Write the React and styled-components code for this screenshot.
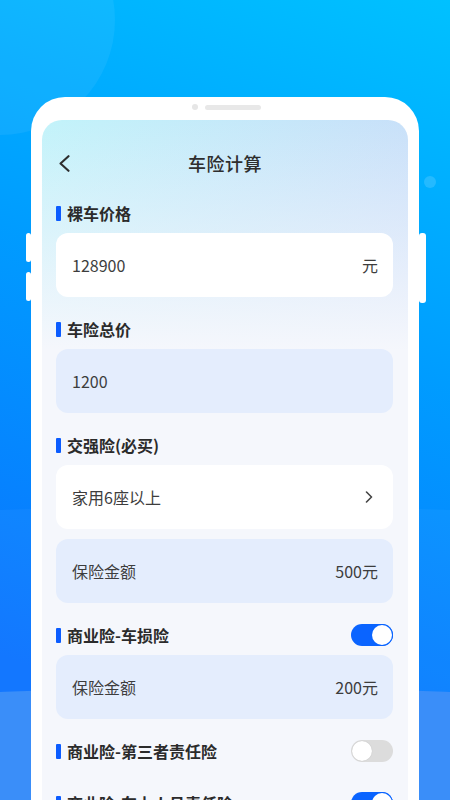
import React from "react";
import styled, { createGlobalStyle } from "styled-components";

const GlobalStyle = createGlobalStyle`
  html, body {
    margin: 0;
    padding: 0;
  }
  body {
    font-family: "Noto Sans CJK SC", "Noto Sans", sans-serif;
    color: #333;
  }
`;

const Page = styled.div`
  position: relative;
  width: 450px;
  height: 800px;
  overflow: hidden;
  background: linear-gradient(200deg, #00c1ff 0%, #009cff 40%, #0a72ff 85%);
`;

const Bubble = styled.div`
  position: absolute;
  border-radius: 50%;
  left: ${(p) => p.$x}px;
  top: ${(p) => p.$y}px;
  width: ${(p) => p.$size}px;
  height: ${(p) => p.$size}px;
  background: rgba(255, 255, 255, ${(p) => p.$alpha});
`;

const Wave = styled.div`
  position: absolute;
  left: -1275px;
  top: ${(p) => p.$top}px;
  width: 3000px;
  height: 900px;
  border-radius: 50%;
  background: ${(p) => p.$color};
`;

const Phone = styled.div`
  position: relative;
  z-index: 1;
  margin: 97px 0 0 31px;
  width: 388px;
  height: 760px;
  box-sizing: border-box;
  padding: 23px 11px 0;
  background: #fff;
  border-radius: 34px 34px 0 0;
`;

const SideButton = styled.div`
  position: absolute;
  top: ${(p) => p.$top}px;
  ${(p) => (p.$right ? "right: -7px;" : "left: -5px;")}
  width: ${(p) => (p.$right ? 7 : 5)}px;
  height: ${(p) => p.$h}px;
  background: #fff;
  border-radius: 3px;
`;

const Speaker = styled.div`
  position: absolute;
  top: 7px;
  left: 161px;
  display: flex;
  align-items: center;
  gap: 7px;
`;

const Dot = styled.span`
  width: 6px;
  height: 6px;
  border-radius: 50%;
  background: #e6e6e6;
`;

const Slot = styled.span`
  width: 56px;
  height: 5px;
  border-radius: 3px;
  background: #e8e8e8;
`;

const Screen = styled.div`
  height: 100%;
  border-radius: 20px 20px 0 0;
  overflow: hidden;
  background:
    linear-gradient(180deg, rgba(245, 247, 252, 0) 0px, #f5f7fc 230px),
    linear-gradient(115deg, #c2f3fa 0%, #cadaf9 70%, #c6d6f8 100%);
`;

const Header = styled.div`
  display: grid;
  grid-template-columns: 1fr auto 1fr;
  align-items: center;
  height: 26px;
  padding-top: 30px;
  margin-bottom: 25px;
`;

const BackButton = styled.div`
  display: flex;
  align-items: center;
  padding-left: 16px;
`;

const Title = styled.div`
  font-size: 18px;
  font-weight: 500;
  line-height: 26px;
  color: #2e2e2e;
  letter-spacing: 0.5px;
`;

const Content = styled.div`
  padding: 0 15px 0 14px;
`;

const Section = styled.div`
  display: flex;
  flex-direction: column;
  margin-bottom: 20px;
`;

const LabelRow = styled.div`
  display: flex;
  align-items: center;
  justify-content: space-between;
  height: 24px;
  margin-bottom: 8px;
`;

const Label = styled.div`
  display: flex;
  align-items: center;
  gap: 6px;
  font-size: 16px;
  font-weight: 700;
  color: #2b2b2b;
  &::before {
    content: "";
    width: 5px;
    height: 15px;
    background: #0b5cff;
    border-radius: 1px;
  }
`;

const Cards = styled.div`
  display: flex;
  flex-direction: column;
  gap: 10px;
`;

const Card = styled.div`
  display: flex;
  align-items: center;
  justify-content: space-between;
  height: 64px;
  padding: 0 ${(p) => (p.$arrow ? 20 : 15)}px 0 16px;
  border-radius: 12px;
  background: ${(p) => (p.$tint ? "#e4edfd" : "#ffffff")};
  font-size: 16px;
  color: #3d3d3d;
`;

const Switch = styled.div`
  position: relative;
  width: 42px;
  height: 22px;
  border-radius: 11px;
  background: ${(p) => (p.$on ? "#0a64ff" : "#dcdcdc")};
  &::after {
    content: "";
    position: absolute;
    top: 1px;
    left: ${(p) => (p.$on ? "21px" : "1px")};
    width: 20px;
    height: 20px;
    border-radius: 50%;
    background: #fff;
    box-shadow: ${(p) =>
      p.$on ? "0 0 0 1px #0a64ff" : "0 0 1px rgba(0,0,0,0.2)"};
  }
`;

const BackIcon = () => (
  <svg width="12" height="17" viewBox="0 0 12 17">
    <path
      d="M10.5 1.2 L2.5 8.5 L10.5 15.8"
      fill="none"
      stroke="#2e2e2e"
      strokeWidth="2.1"
      strokeLinecap="round"
      strokeLinejoin="round"
    />
  </svg>
);

const ArrowIcon = () => (
  <svg width="8" height="12" viewBox="0 0 8 12">
    <path
      d="M1.5 1 L6.5 6 L1.5 11"
      fill="none"
      stroke="#444"
      strokeWidth="1.6"
      strokeLinecap="round"
      strokeLinejoin="round"
    />
  </svg>
);

const sections = [
  { label: "裸车价格", cards: [{ left: "128900", right: "元" }] },
  { label: "车险总价", cards: [{ left: "1200", tint: true }] },
  {
    label: "交强险(必买)",
    cards: [
      { left: "家用6座以上", arrow: true },
      { left: "保险金额", right: "500元", tint: true },
    ],
  },
  {
    label: "商业险-车损险",
    toggle: true,
    cards: [{ left: "保险金额", right: "200元", tint: true }],
  },
  { label: "商业险-第三者责任险", toggle: false, cards: [] },
  { label: "商业险-车上人员责任险", toggle: true, cards: [] },
];

export default function App() {
  return (
    <Page>
      <GlobalStyle />
      <Bubble $x={-115} $y={-95} $size={230} $alpha={0.06} />
      <Bubble $x={424} $y={176} $size={12} $alpha={0.14} />
      <Wave $top={505} $color="rgba(255,255,255,0.04)" />
      <Wave $top={687} $color="#3a8ef9" />
      <Phone>
        <SideButton $top={136} $h={29} />
        <SideButton $top={175} $h={29} />
        <SideButton $right $top={136} $h={70} />
        <Speaker>
          <Dot />
          <Slot />
        </Speaker>
        <Screen>
          <Header>
            <BackButton>
              <BackIcon />
            </BackButton>
            <Title>车险计算</Title>
            <div />
          </Header>
          <Content>
            {sections.map((s) => (
              <Section key={s.label}>
                <LabelRow>
                  <Label>{s.label}</Label>
                  {s.toggle !== undefined && <Switch $on={s.toggle} />}
                </LabelRow>
                {s.cards.length > 0 && (
                  <Cards>
                    {s.cards.map((c, i) => (
                      <Card key={i} $tint={c.tint} $arrow={c.arrow}>
                        <span>{c.left}</span>
                        {c.right && <span>{c.right}</span>}
                        {c.arrow && <ArrowIcon />}
                      </Card>
                    ))}
                  </Cards>
                )}
              </Section>
            ))}
          </Content>
        </Screen>
      </Phone>
    </Page>
  );
}
